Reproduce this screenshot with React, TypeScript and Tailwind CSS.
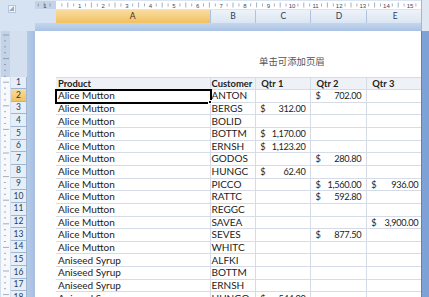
import React from 'react';

const ROW_H = 12.65;
const COLS = [
  { key: 'A', w: 154.5 },
  { key: 'B', w: 45.8 },
  { key: 'C', w: 55.2 },
  { key: 'D', w: 55.8 },
  { key: 'E', w: 57 },
];

type Row = { p: string; c: string; q1?: string; q2?: string; q3?: string };

const rows: Row[] = [
  { p: 'Alice Mutton', c: 'ANTON', q2: '702.00' },
  { p: 'Alice Mutton', c: 'BERGS', q1: '312.00' },
  { p: 'Alice Mutton', c: 'BOLID' },
  { p: 'Alice Mutton', c: 'BOTTM', q1: '1,170.00' },
  { p: 'Alice Mutton', c: 'ERNSH', q1: '1,123.20' },
  { p: 'Alice Mutton', c: 'GODOS', q2: '280.80' },
  { p: 'Alice Mutton', c: 'HUNGC', q1: '62.40' },
  { p: 'Alice Mutton', c: 'PICCO', q2: '1,560.00', q3: '936.00' },
  { p: 'Alice Mutton', c: 'RATTC', q2: '592.80' },
  { p: 'Alice Mutton', c: 'REGGC' },
  { p: 'Alice Mutton', c: 'SAVEA', q3: '3,900.00' },
  { p: 'Alice Mutton', c: 'SEVES', q2: '877.50' },
  { p: 'Alice Mutton', c: 'WHITC' },
  { p: 'Aniseed Syrup', c: 'ALFKI' },
  { p: 'Aniseed Syrup', c: 'BOTTM' },
  { p: 'Aniseed Syrup', c: 'ERNSH' },
  { p: 'Aniseed Syrup', c: 'HUNGO', q1: '544.00' },
];

const font = { fontFamily: 'Lato, "Noto Sans CJK SC", sans-serif' };

const TopRuler = () => {
  const ticks = [];
  for (let i = -4; i < 66; i++) {
    const x = 21 + i * 5.9;
    if (i % 4 === 0) continue;
    ticks.push(<line key={i} x1={x} x2={x} y1={i % 2 === 0 ? 2.5 : 3.5} y2={i % 2 === 0 ? 7.5 : 6.5} stroke="#6b7a90" strokeWidth={0.6} />);
  }
  const nums = [];
  for (let i = 1; i <= 15; i++) {
    nums.push(<text key={i} x={21 + i * 23.6} y={7.6} fontSize={6} textAnchor="middle" fill="#3c4a5e" fontFamily="Liberation Sans, sans-serif">{i}</text>);
  }
  return (
    <svg width={386} height={10} className="block">
      <rect x={0} y={0} width={386} height={10} fill="#dbe5f2" />
      <rect x={0} y={1} width={21} height={8} fill="#c4d3e8" />
      <rect x={21} y={1} width={365} height={8} fill="#ffffff" />
      <text x={10} y={7.6} fontSize={6} textAnchor="middle" fill="#3c4a5e" fontFamily="Liberation Sans, sans-serif">1</text>
      {ticks}
      {nums}
    </svg>
  );
};

const LeftRuler = () => {
  const ticks = [];
  for (let i = 0; i < 46; i++) {
    const y = 4 + i * 5.9;
    const long = i % 4 === 0;
    ticks.push(<line key={i} y1={y} y2={y} x1={long ? 3 : 4} x2={long ? 9 : 6} stroke="#6b7a90" strokeWidth={0.6} />);
  }
  return (
    <svg width={11} height={266} className="block">
      <rect x={0} y={0} width={11} height={266} fill="#d4e0f0" />
      <rect x={1} y={0} width={9} height={46} fill="#c4d3e8" />
      <rect x={1} y={46} width={9} height={220} fill="#f7f9fc" />
      {ticks}
    </svg>
  );
};

const Money = ({ v }: { v?: string }) =>
  v ? (
    <div className="flex justify-between pl-[4px] pr-[5px] text-[9.2px] tracking-[-0.3px]">
      <span>$</span>
      <span>{v}</span>
    </div>
  ) : null;

const Cell = ({ w, children, className = '' }: { w: number; children?: React.ReactNode; className?: string }) => (
  <div
    className={`shrink-0 border-r border-b border-[#d5dce7] flex items-end leading-[11px] pb-[0.5px] overflow-hidden whitespace-nowrap ${className}`}
    style={{ width: w, height: ROW_H }}
  >
    {children}
  </div>
);

export default function App() {
  return (
    <div className="w-[429px] h-[297px] overflow-hidden bg-[#c9daf0] flex flex-col" style={font}>
      {/* top band */}
      <div className="flex h-[31px] shrink-0">
        <div className="w-[35px] bg-[#d6e3f3] relative">
          <div className="absolute left-[8px] top-[5px] w-[8px] h-[8px] bg-[#eef3fa] border border-[#b5c6dd]">
            <div className="absolute right-[1px] bottom-[1px] w-0 h-0 border-l-[5px] border-l-transparent border-b-[5px] border-b-[#9aaabf]" />
          </div>
        </div>
        <div className="flex flex-col w-[386px] overflow-hidden">
          <TopRuler />
          <div className="flex h-[13px] bg-gradient-to-b from-[#eef3fa] to-[#dbe5f2]">
            <div className="w-[21px] shrink-0 bg-[#d6e3f3]" />
            {COLS.map((c) => (
              <div
                key={c.key}
                className={`shrink-0 flex items-center justify-center text-[8.5px] border-r border-[#b1c3dc] ${
                  c.key === 'A' ? 'bg-gradient-to-b from-[#f9dca0] to-[#f2c15f] text-[#3b3020]' : 'text-[#29405e]'
                }`}
                style={{ width: c.w }}
              >
                {c.key}
              </div>
            ))}
          </div>
          <div className="h-[8px] bg-gradient-to-b from-[#c4d6ee] to-[#a9c2e4]" />
        </div>
        <div className="w-[8px] bg-[#dfe7f3] border-l border-[#9fb6d6]" />
      </div>

      {/* body */}
      <div className="flex flex-1 min-h-0">
        <LeftRuler />
        <div className="w-[16px] shrink-0 flex flex-col bg-[#d4e0f0]">
          <div className="h-[45.5px] shrink-0" />
          {Array.from({ length: 18 }, (_, i) => (
            <div
              key={i}
              className={`shrink-0 border-b border-r border-[#9fb6d3] flex items-center justify-center text-[8.5px] ${
                i === 1 ? 'bg-gradient-to-b from-[#f9dca0] to-[#f2c15f] text-[#3b3020]' : 'bg-[#e6eef8] text-[#29405e]'
              }`}
              style={{ height: ROW_H }}
            >
              {i + 1}
            </div>
          ))}
        </div>
        <div className="w-[8px] shrink-0 bg-gradient-to-r from-[#b4cae7] to-[#a6bfe1]" />

        {/* page */}
        <div className="w-[386px] shrink-0 bg-white overflow-hidden flex flex-col">
          <div className="h-[45.5px] shrink-0 flex items-center pl-[224px] pt-[14px] text-[9.4px] text-[#555]" style={{ fontFamily: '"Noto Sans CJK SC", sans-serif' }}>
            单击可添加页眉
          </div>
          <div className="pl-[21px] text-[10px] text-[#222]">
            <div className="flex border-t border-[#d5dce7] bg-[#eef1f5] font-bold text-[9.4px]">
              <Cell w={COLS[0].w} className="pl-[2px]">Product</Cell>
              <Cell w={COLS[1].w} className="pl-[1px]">Customer</Cell>
              <Cell w={COLS[2].w} className="pl-[5px]">Qtr 1</Cell>
              <Cell w={COLS[3].w} className="pl-[5px]">Qtr 2</Cell>
              <Cell w={COLS[4].w} className="pl-[5px]">Qtr 3</Cell>
            </div>
            {rows.map((r, i) => (
              <div key={i} className="flex">
                <Cell w={COLS[0].w} className={`pl-[2px] ${i === 0 ? 'relative overflow-visible outline-2 outline-black -outline-offset-1 z-10' : ''}`}>
                  {r.p}
                  {i === 0 && <div className="absolute -right-[2px] -bottom-[2px] w-[4px] h-[4px] bg-black border border-white" />}
                </Cell>
                <Cell w={COLS[1].w} className="pl-[1px]">{r.c}</Cell>
                <Cell w={COLS[2].w}><div className="w-full"><Money v={r.q1} /></div></Cell>
                <Cell w={COLS[3].w}><div className="w-full"><Money v={r.q2} /></div></Cell>
                <Cell w={COLS[4].w}><div className="w-full"><Money v={r.q3} /></div></Cell>
              </div>
            ))}
          </div>
        </div>
        <div className="w-[8px] shrink-0 bg-[#7fa2d6] border-l border-[#5d82bd]" />
      </div>
    </div>
  );
}
